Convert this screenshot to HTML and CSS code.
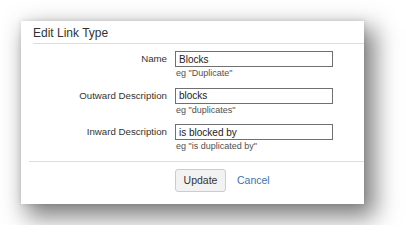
FILE: index.html
```html
<!DOCTYPE html>
<html lang="en">
<head>
  <meta charset="UTF-8" />
  <title>Edit Link Type</title>
  <link rel="stylesheet" href="styles.css">
</head>
<body>
  <div class="dialog">
    <h2 class="dialog-title">Edit Link Type</h2>

    <form class="link-form">
      <div class="field">
        <label for="name">Name</label>
        <input type="text" id="name" value="Blocks" />
        <span class="hint">eg "Duplicate"</span>
      </div>
      <div class="field">
        <label for="outward">Outward Description</label>
        <input type="text" id="outward" value="blocks" />
        <span class="hint">eg "duplicates"</span>
      </div>
      <div class="field">
        <label for="inward">Inward Description</label>
        <input type="text" id="inward" value="is blocked by" />
        <span class="hint">eg "is duplicated by"</span>
      </div>

      <div class="buttons">
        <button type="button">Update</button>
        <a href="#" class="cancel">Cancel</a>
      </div>
    </form>
  </div>
</body>
</html>
```

FILE: styles.css
```css
body {
  margin: 0;
  padding: 21px;
  background: #fff;
  font-family: "Liberation Sans", Arial, sans-serif;
  color: #333;
}
.dialog {
  width: 343px;
  height: 183px;
  background: #fff;
  box-shadow: 8px 10px 22px 3px rgba(0,0,0,0.5), 0 0 5px rgba(0,0,0,0.12);
}
.dialog-title {
  margin: 0 0 0 12px;
  padding: 3px 0 1px;
  font-size: 12px;
  font-weight: normal;
  line-height: 18px;
  color: #333;
  border-bottom: 1px solid #ddd;
}
.link-form {
  padding-top: 7px;
}
.field {
  display: grid;
  grid-template-columns: 146px 158px;
  column-gap: 8px;
  margin-bottom: 8.5px;
}
.field:last-of-type {
  margin-bottom: 8px;
}
.field label {
  text-align: right;
  font-size: 9.7px;
  line-height: 16px;
  color: #333;
}
.field input {
  box-sizing: border-box;
  width: 158px;
  height: 16px;
  margin: 0;
  padding: 0 3px;
  border: 1px solid #707070;
  font-family: inherit;
  font-size: 10px;
  color: #222;
  outline: none;
}
.hint {
  grid-column: 2;
  padding: 1px 0 0 1px;
  font-size: 9px;
  line-height: 11px;
  color: #505050;
}
.buttons {
  display: flex;
  align-items: center;
  gap: 11px;
  margin: 0 0 0 8px;
  padding: 7px 0 0 146px;
  border-top: 1px solid #ddd;
}
.buttons button {
  width: 51px;
  height: 23px;
  padding: 0;
  background: #f2f2f2;
  border: 1px solid #ccc;
  border-radius: 3px;
  font-family: inherit;
  font-size: 10.5px;
  color: #333;
}
.cancel {
  font-size: 10.5px;
  color: #3b73af;
  text-decoration: none;
}
```
